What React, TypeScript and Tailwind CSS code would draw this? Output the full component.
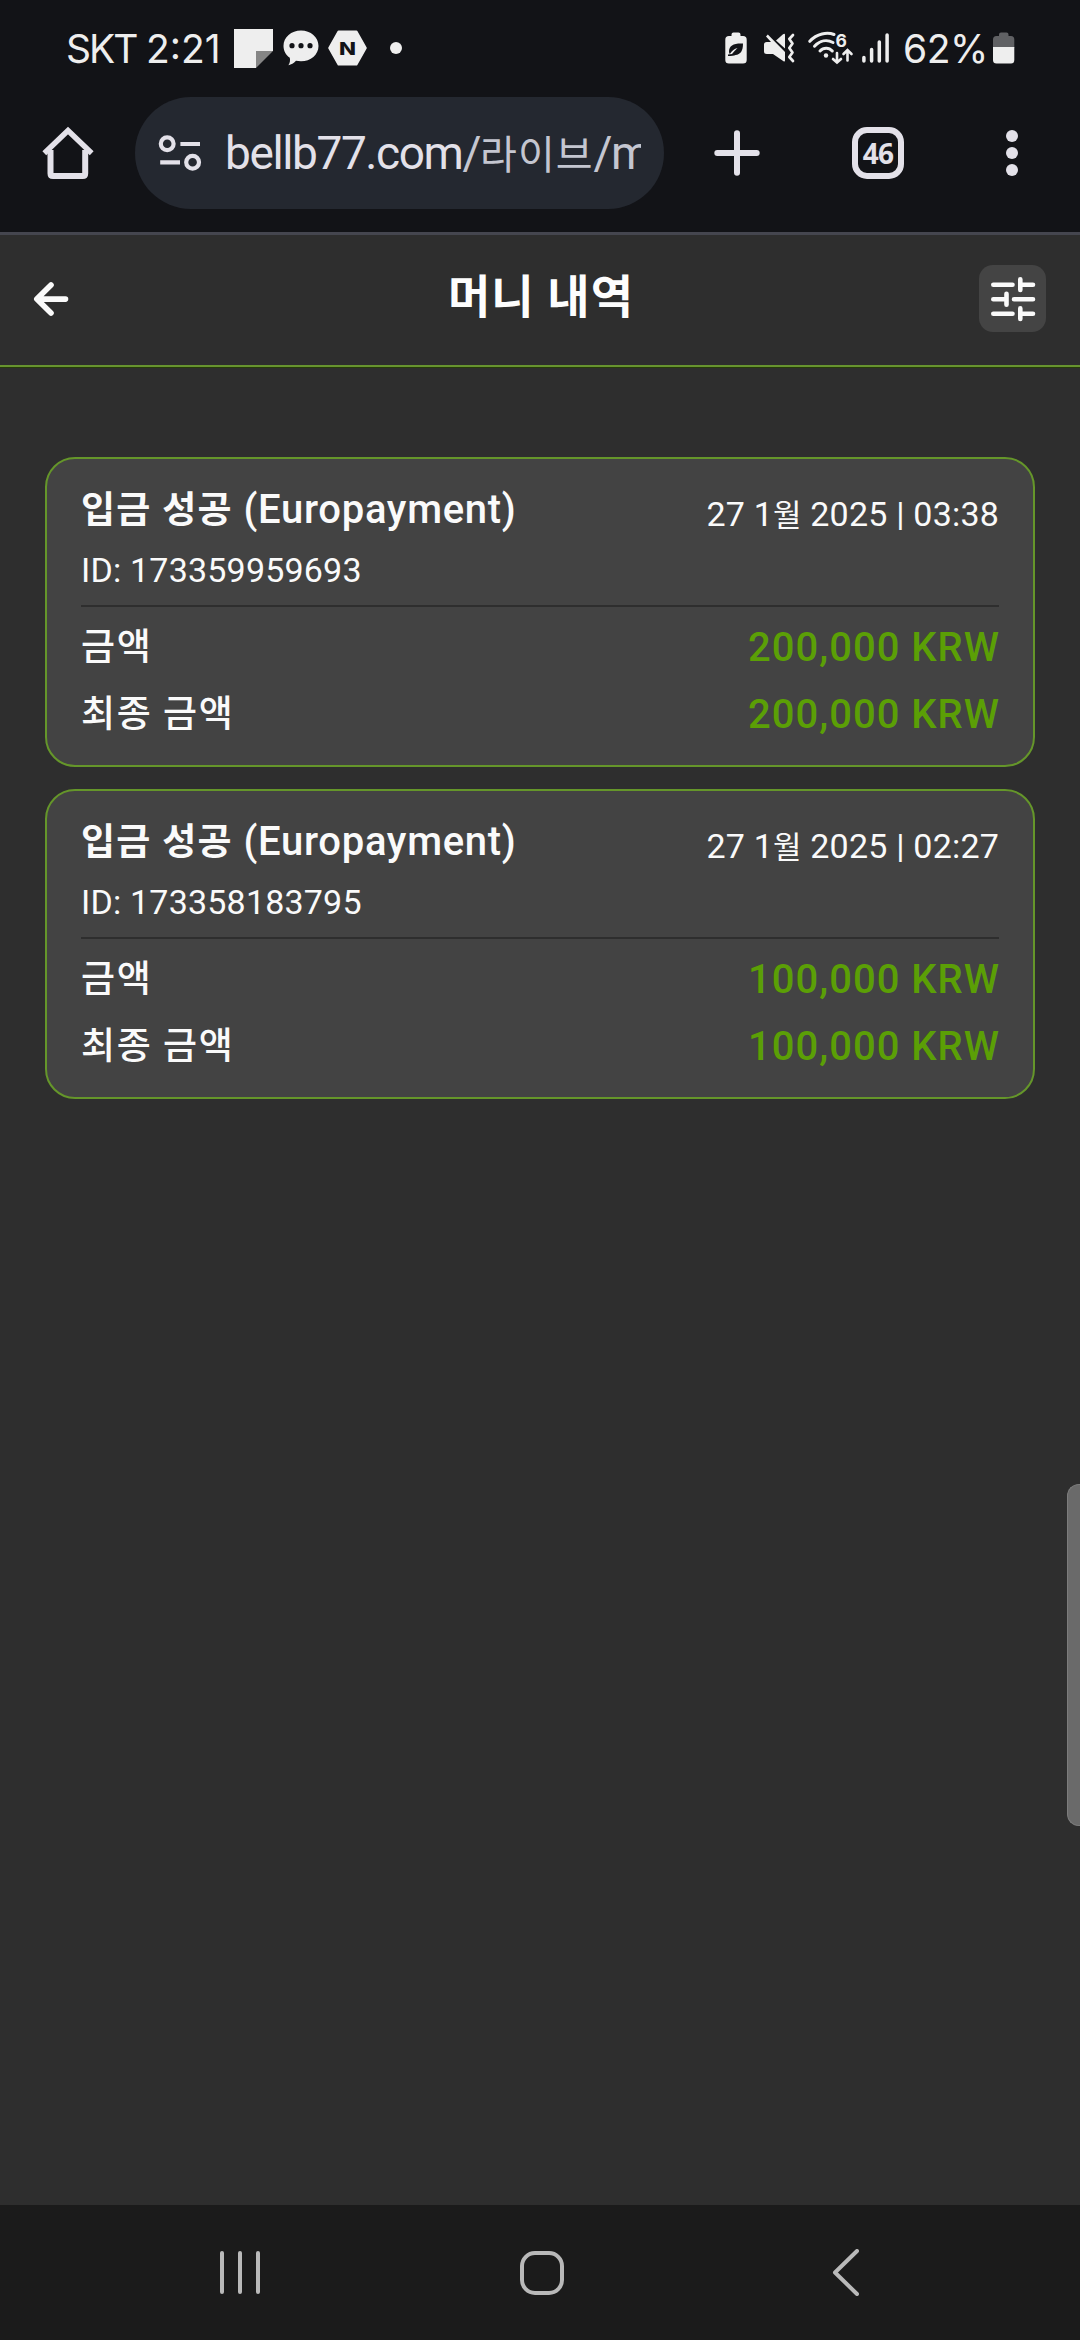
import type { ReactNode } from 'react';

type Transaction = { id: string; date: string; time: string; amount: string };

const transactions: Transaction[] = [
  { id: '173359959693', date: '2025', time: '03:38', amount: '200,000 KRW' },
  { id: '173358183795', date: '2025', time: '02:27', amount: '100,000 KRW' },
];

function NoteIcon() {
  return (
    <svg className="h-[39px] w-[39px]" viewBox="0 0 39 39">
      <path d="M0 0H39V22H22V39H0Z" fill="#eeeeee" />
      <path d="M22 22H39L22 39Z" fill="#858585" />
    </svg>
  );
}

function ChatIcon() {
  return (
    <svg className="ml-[10px] h-[36px] w-[36px]" viewBox="0 0 36 36">
      <path
        d="M18 0.5C27.7 0.5 35.5 7.3 35.5 15.9C35.5 24.6 27.7 31.2 18 31.2C16 31.2 14.5 31.1 13 30.8C10.5 33.4 8.5 34.7 5.4 35.2C7 33 7.3 30.5 6.8 27.8C3 25 0.5 20.8 0.5 15.9C0.5 7.3 8.3 0.5 18 0.5Z"
        fill="#eeeeee"
      />
      <circle cx="9" cy="15.7" r="2.6" fill="#121317" />
      <circle cx="18" cy="15.7" r="2.6" fill="#121317" />
      <circle cx="27" cy="15.7" r="2.6" fill="#121317" />
    </svg>
  );
}

function HexIcon() {
  return (
    <svg className="ml-[9px] h-[36px] w-[39px]" viewBox="0 0 39 36">
      <path
        d="M10.5 1.5H28.5L37.8 18L28.5 34.5H10.5L1.2 18Z"
        fill="#eeeeee"
        stroke="#eeeeee"
        strokeWidth="2"
        strokeLinejoin="round"
      />
      <text
        x="11"
        y="24.7"
        fontFamily="Inter, sans-serif"
        fontWeight="800"
        fontSize="18"
        textLength="17"
        lengthAdjust="spacingAndGlyphs"
        fill="#121317"
      >
        N
      </text>
    </svg>
  );
}

function LeafBatteryIcon() {
  return (
    <svg className="h-[32px] w-[22px]" viewBox="0 0 22 32">
      <path
        d="M6.5 2.5Q6.5 0.5 8.5 0.5H13.5Q15.5 0.5 15.5 2.5V4H18Q21.7 4 21.7 7.7V28Q21.7 31.5 18 31.5H4Q0.3 31.5 0.3 28V7.7Q0.3 4 4 4H6.5Z"
        fill="#eeeeee"
      />
      <path
        d="M18 11.5C9 11 4 13.5 4 19.5C4 20.5 4.3 21.4 4.8 22C7 18.5 9.5 17 12.5 16C10.5 18 8.5 20 7 22L3 22.5V24C7 24 9 23.6 10.5 23C15.5 22.5 18 19 18 11.5Z"
        fill="#121317"
      />
    </svg>
  );
}

function MuteVibrateIcon() {
  return (
    <svg className="ml-[17px] h-[30px] w-[31px]" viewBox="764 33 31 30">
      <path
        d="M766.8 42H771L766 36.5L767.8 34.6L785 52V60.5Q785 62 783.5 61.2L773 54H766.8Q764 54 764 51.5V44.5Q764 42 766.8 42Z"
        fill="#eeeeee"
      />
      <path d="M776 40.5L783 34.3Q785 33 785 35V48.5Z" fill="#eeeeee" />
      <path
        d="M793 35L789.3 39L792.5 43.5L789.3 48L792.5 52.5L789.3 57L793 61"
        fill="none"
        stroke="#eeeeee"
        strokeWidth="2.7"
        strokeLinejoin="round"
        strokeLinecap="round"
      />
    </svg>
  );
}

function WifiIcon() {
  return (
    <svg className="ml-[13px] h-[34px] w-[46px]" viewBox="808 31 46 34">
      <g fill="none" stroke="#eeeeee" strokeWidth="3" strokeLinecap="round">
        <path d="M809.8 41.3C817 33.5 827 32 834 34.5" />
        <path d="M814.5 46.2C820 40.5 827 39.3 833 42.5" />
        <path d="M820 51C823.5 47.2 829 47.2 832.3 51" />
        <path d="M837 53V62M833 59L837 62.5L841 59" strokeWidth="2.6" />
        <path d="M847.5 60.5V51M843.5 54L847.5 50L851.5 54" strokeWidth="2.6" />
      </g>
      <circle cx="826" cy="55.5" r="2.2" fill="#eeeeee" />
      <text x="835.5" y="46.5" fontFamily="Inter, sans-serif" fontWeight="700" fontSize="17.5" fill="#eeeeee">
        6
      </text>
    </svg>
  );
}

function SignalIcon() {
  return (
    <svg className="ml-[8px] h-[30px] w-[28px]" viewBox="862 32.5 28 30">
      <path
        d="M863.9 57V60.5M871.6 49V60.5M879.3 41.5V60.5M887.1 34.5V60.5"
        stroke="#eeeeee"
        strokeWidth="3.5"
        strokeLinecap="round"
      />
    </svg>
  );
}

function BatteryIcon() {
  return (
    <svg className="h-[32px] w-[22px]" viewBox="0 0 22 32">
      <path d="M6 2.5Q6 0.5 8 0.5H13.5Q15.5 0.5 15.5 2.5V4H18Q21.3 4 21.3 7.5V16H0V7.5Q0 4 3.5 4H6Z" fill="#606164" />
      <path d="M0 15H21.3V28Q21.3 31.5 18 31.5H3.5Q0 31.5 0 28Z" fill="#eeeeee" />
    </svg>
  );
}

function StatusBar() {
  return (
    <div className="flex h-24 items-center justify-between pr-[65px] pl-[66px] font-['Inter'] text-[39px] leading-none text-[#eeeeee]">
      <div className="flex items-center">
        <span className="w-[80px] tracking-[-2px]">SKT</span>
        <span className="w-[88px] whitespace-nowrap">2:21</span>
        <NoteIcon />
        <ChatIcon />
        <HexIcon />
        <span className="ml-[23px] size-3 rounded-full bg-[#eeeeee]" />
      </div>
      <div className="flex items-center">
        <LeafBatteryIcon />
        <MuteVibrateIcon />
        <WifiIcon />
        <SignalIcon />
        <span className="ml-[13px] w-[90px] whitespace-nowrap tracking-[-0.5px]">62%</span>
        <BatteryIcon />
      </div>
    </div>
  );
}

function BrowserBar() {
  return (
    <div className="flex h-[136px] pt-px text-[#e3e1e9]">
      <div className="flex h-28 w-[135px] items-center pl-[42px]">
        <svg className="h-[54px] w-[52px]" viewBox="42 126 52 54" fill="none" stroke="#e3e1e9">
          <path d="M50.5 150V173.5Q50.5 176 53 176H82.7Q85.2 176 85.2 173.5V150" strokeWidth="6" />
          <path d="M44.3 153.3L68 130.5L91.7 153.3" strokeWidth="5.5" />
        </svg>
      </div>
      <div className="flex h-28 w-[529px] items-center rounded-full bg-[#242830] pl-[23px]">
        <svg className="h-[38px] w-[44px]" viewBox="158 134 44 38" fill="none" stroke="#e3e1e9" strokeWidth="4.2">
          <circle cx="167.2" cy="143.8" r="6.4" />
          <circle cx="192.6" cy="162.3" r="6.4" />
          <path d="M180.4 144H200M160.2 162.3H180" />
        </svg>
        <div className="ml-[23px] h-[70px] w-[416px] overflow-hidden font-['Roboto','Noto_Sans_CJK_KR',sans-serif] text-[46px] leading-[70px] tracking-[-1.4px] whitespace-nowrap">
          bellb77.com
          <span className="text-[#c4c6d0]">
            /<span className="text-[40px] leading-0 tracking-[1px]">라이브</span>/m
          </span>
        </div>
      </div>
      <div className="flex h-28 flex-1 items-center pl-[50px]">
        <svg className="h-[46px] w-[46px]" viewBox="0 0 46 46" stroke="#e3e1e9" strokeWidth="6" strokeLinecap="round">
          <path d="M23 3.3V42.7M3.3 23H42.7" />
        </svg>
        <div className="ml-[92px] flex h-[52px] w-[52px] items-center justify-center rounded-[15px] border-[6px] border-[#e3e1e9] font-['Noto_Sans'] text-[28px] leading-none font-bold tracking-[-0.8px]">
          46
        </div>
        <div className="ml-[102px] flex flex-col gap-[5px]">
          <span className="size-3 rounded-full bg-[#e3e1e9]" />
          <span className="size-3 rounded-full bg-[#e3e1e9]" />
          <span className="size-3 rounded-full bg-[#e3e1e9]" />
        </div>
      </div>
    </div>
  );
}

function PageHeader() {
  return (
    <header className="flex h-[132px] items-center justify-between border-b-2 border-[#67942f] pr-[34px] pb-[3px] pl-[33px] shadow-[0_1px_0_#263c0a]">
      <div className="flex w-[67px]">
        <svg
          className="h-[36px] w-[36px]"
          viewBox="33 280.5 36 36"
          fill="none"
          stroke="#fafafa"
          strokeWidth="5.6"
          strokeLinecap="round"
          strokeLinejoin="round"
        >
          <path d="M65.5 298.6H37M51 284.5L36.8 298.6L51 312.6" />
        </svg>
      </div>
      <h1 className="pb-[3px] pl-[3px] text-[46px] leading-[60px] font-bold tracking-[1.1px] text-[#fdfdfd]">머니 내역</h1>
      <div className="flex h-[67px] w-[67px] items-center justify-center rounded-[14px] bg-[#444444]">
        <svg
          className="h-[46px] w-[46px]"
          viewBox="989 275.3 46 46"
          fill="none"
          stroke="#fafafa"
          strokeWidth="4.6"
          strokeLinecap="round"
        >
          <path d="M992.3 284H1011.5M1019.3 278.5V289.3M1019.3 284H1032" />
          <path d="M992.3 298.5H1005M1005.5 293V304M1013 298.5H1032" />
          <path d="M992.3 313H1011.5M1019.3 307.7V318.3M1019.3 313H1032" />
        </svg>
      </div>
    </header>
  );
}

function Hangul({ children }: { children: ReactNode }) {
  return <span className="text-[37px] leading-0 tracking-[1.3px]">{children}</span>;
}

function AmountRow({ label, value }: { label: string; value: string }) {
  return (
    <div className="flex items-center justify-between leading-[67px]">
      <span className="text-[37px] font-medium tracking-[1.6px] text-[#fafafa]">{label}</span>
      <span className="-mr-px text-[40px] font-medium tracking-[1px] text-[#5b9f06]">{value}</span>
    </div>
  );
}

function TransactionCard({ tx }: { tx: Transaction }) {
  return (
    <article className="h-[310px] rounded-[30px] border-2 border-[#65962a] bg-[#434343] px-[34px] pt-[27px] text-[#fafafa]">
      <div className="flex justify-between leading-[48px]">
        <h2 className="text-[40px] font-medium tracking-[0.7px]">
          <span className="font-bold">
            <Hangul>입금 성공</Hangul>
          </span>{' '}
          (Europayment)
        </h2>
        <p className="pt-1 text-[34px] tracking-[0.2px]">
          27 1<span className="text-[31px] leading-0">월</span> {tx.date} | {tx.time}
        </p>
      </div>
      <p className="mt-[12px] text-[34px] leading-[40px] tracking-[0.2px]">ID: {tx.id}</p>
      <div className="mt-[15px] mb-[7px] h-0.5 bg-[#2e2e2e]" />
      <AmountRow label="금액" value={tx.amount} />
      <AmountRow label="최종 금액" value={tx.amount} />
    </article>
  );
}

function NavBar() {
  return (
    <nav className="flex h-[135px] items-center bg-[#1b1b1b] pl-[220px]">
      <div className="flex gap-[14px]">
        <span className="h-[43px] w-1 rounded-full bg-[#b9b9b9]" />
        <span className="h-[43px] w-1 rounded-full bg-[#b9b9b9]" />
        <span className="h-[43px] w-1 rounded-full bg-[#b9b9b9]" />
      </div>
      <div className="ml-[260px] h-[44px] w-[44px] rounded-[15px] border-4 border-[#b9b9b9]" />
      <svg className="ml-[268px] h-[47px] w-[27px]" viewBox="0 0 27 47" fill="none" stroke="#b9b9b9" strokeWidth="4">
        <path d="M25 2L3 23.5L25 45" strokeLinecap="round" strokeLinejoin="round" />
      </svg>
    </nav>
  );
}

export default function App() {
  return (
    <div className="relative flex h-[2340px] w-[1080px] flex-col overflow-hidden bg-[#2e2e2e] font-['Roboto','Noto_Sans_CJK_KR',sans-serif]">
      <div className="border-b-[3px] border-[#45464f] bg-[#121317]">
        <StatusBar />
        <BrowserBar />
      </div>
      <PageHeader />
      <main className="flex flex-1 flex-col gap-[22px] px-[45px] pt-[90px]">
        {transactions.map((tx) => (
          <TransactionCard key={tx.id} tx={tx} />
        ))}
      </main>
      <NavBar />
      <div className="absolute top-[1484px] right-0 h-[342px] w-[13px] rounded-l-[12px] border border-r-0 border-[#7c7c7c] bg-[#6a6a6a]" />
    </div>
  );
}
